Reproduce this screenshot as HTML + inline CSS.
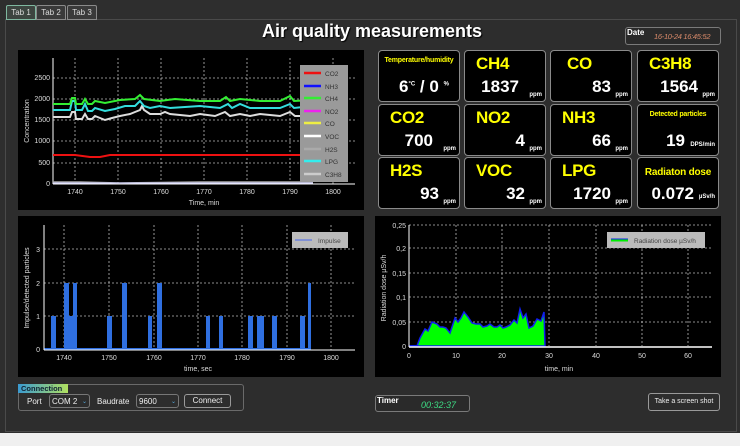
<!DOCTYPE html>
<html><head><meta charset="utf-8"><style>
*{margin:0;padding:0;box-sizing:border-box}
body{width:740px;height:446px;background:#f0f0f0;position:relative;overflow:hidden;font-family:"Liberation Sans",sans-serif}
.a{position:absolute;white-space:nowrap}
#main{left:0;top:0;width:740px;height:433px;background:#2e2e2e}
#panel{left:5px;top:19px;width:732px;height:413px;border:1px solid #4a4a4a;background:#2d2d2d}
.tab{top:5px;height:15px;border:1px solid #8a8a8a;background:#3a3a3a;color:#ddd;font-size:8px;text-align:center;line-height:13px;border-radius:2px 2px 0 0}
.tile{width:82px;height:52px;background:#000;border:1px solid #8a8a8a;border-radius:4px}
.tile .t{position:absolute;left:11px;top:3px;color:#ffff00;font-weight:bold;font-size:17px;letter-spacing:-0.3px}
.tile .ts{position:absolute;left:0;width:100%;text-align:center;top:6px;color:#ffff00;font-weight:bold;font-size:7px;letter-spacing:-0.2px}
.tile .v{position:absolute;right:20px;top:26px;color:#fff;font-weight:bold;font-size:17px}
.tile .u{position:absolute;right:3px;bottom:3px;color:#fff;font-weight:bold;font-size:6px}
.box{border:1px solid #7a7a7a;border-radius:3px}
svg text{font-family:"Liberation Sans",sans-serif}
</style></head><body>
<div class="a" id="main"></div>
<div class="a" id="panel"></div>
<div class="a tab" style="left:6px;width:30px;border-color:#7fb8a0;background:#3d4540">Tab 1</div>
<div class="a tab" style="left:36px;width:30px">Tab 2</div>
<div class="a tab" style="left:67px;width:30px">Tab 3</div>
<div class="a" style="left:0;width:744px;top:21px;text-align:center;color:#fff;font-weight:bold;font-size:18px;text-shadow:1px 1px 1px #000">Air quality measurements</div>

<div class="a box" style="left:625px;top:27px;width:96px;height:18px;background:#2a2a2a">
<span class="a" style="left:1px;top:0;color:#fff;font-size:8px;font-weight:bold">Date</span>
<span class="a" style="left:28px;top:4px;color:#d98a6a;font-size:7.5px;font-style:italic;letter-spacing:-0.3px">16-10-24 16:45:52</span></div>

<!-- tiles -->
<div class="a tile" style="left:378px;top:50px"><div class="ts">Temperature/humidity</div><div class="a" style="left:20px;top:26px;color:#fff;font-weight:bold;font-size:17px">6<sup style="font-size:6px">°C</sup> / 0 <sup style="font-size:6px">%</sup></div></div>
<div class="a tile" style="left:464px;top:50px"><div class="t">CH4</div><div class="v" style="right:26px">1837</div><div class="u">ppm</div></div>
<div class="a tile" style="left:550px;top:50px"><div class="t" style="left:16px">CO</div><div class="v">83</div><div class="u">ppm</div></div>
<div class="a tile" style="left:637px;top:50px"><div class="t">C3H8</div><div class="v">1564</div><div class="u">ppm</div></div>
<div class="a tile" style="left:378px;top:104px"><div class="t">CO2</div><div class="v" style="right:26px">700</div><div class="u">ppm</div></div>
<div class="a tile" style="left:464px;top:104px"><div class="t">NO2</div><div class="v">4</div><div class="u">ppm</div></div>
<div class="a tile" style="left:550px;top:104px"><div class="t">NH3</div><div class="v">66</div><div class="u">ppm</div></div>
<div class="a tile" style="left:637px;top:104px"><div class="ts">Detected particles</div><div class="v" style="right:33px">19</div><div class="u" style="bottom:7px">DPS/min</div></div>
<div class="a tile" style="left:378px;top:157px"><div class="t">H2S</div><div class="v">93</div><div class="u">ppm</div></div>
<div class="a tile" style="left:464px;top:157px"><div class="t">VOC</div><div class="v">32</div><div class="u">ppm</div></div>
<div class="a tile" style="left:550px;top:157px"><div class="t">LPG</div><div class="v">1720</div><div class="u">ppm</div></div>
<div class="a tile" style="left:637px;top:157px"><div class="ts" style="font-size:10px;top:9px">Radiaton dose</div><div class="v" style="right:24px">0.072</div><div class="u" style="bottom:8px">µSv/h</div></div>

<!-- chart1 -->
<svg class="a" style="left:18px;top:50px" width="346" height="160" viewBox="18 50 346 160">
<rect x="18" y="50" width="346" height="160" fill="#000"/>
<g stroke="#bbb" stroke-dasharray="2,2" stroke-width="0.8">
<line x1="75" y1="58" x2="75" y2="184"/><line x1="118" y1="58" x2="118" y2="184"/><line x1="161" y1="58" x2="161" y2="184"/><line x1="204" y1="58" x2="204" y2="184"/><line x1="247" y1="58" x2="247" y2="184"/><line x1="290" y1="58" x2="290" y2="184"/><line x1="333" y1="58" x2="333" y2="184"/>
<line x1="53" y1="78" x2="355" y2="78"/><line x1="53" y1="99" x2="355" y2="99"/><line x1="53" y1="120" x2="355" y2="120"/><line x1="53" y1="141" x2="355" y2="141"/><line x1="53" y1="163" x2="355" y2="163"/></g>
<line x1="53" y1="58" x2="53" y2="184" stroke="#fff"/><line x1="53" y1="184" x2="355" y2="184" stroke="#fff"/>
<g font-size="7" fill="#ddd" text-anchor="end"><text x="50" y="80">2500</text><text x="50" y="101">2000</text><text x="50" y="122">1500</text><text x="50" y="143">1000</text><text x="50" y="165">500</text><text x="50" y="186">0</text></g>
<g font-size="7" fill="#ddd" text-anchor="middle"><text x="75" y="194">1740</text><text x="118" y="194">1750</text><text x="161" y="194">1760</text><text x="204" y="194">1770</text><text x="247" y="194">1780</text><text x="290" y="194">1790</text><text x="333" y="194">1800</text><text x="204" y="205">Time, min</text></g>
<text font-size="7" fill="#ddd" text-anchor="middle" transform="translate(29,121) rotate(-90)">Concentration</text>
<polyline fill="none" stroke="#ddd" stroke-width="2" points="53,117 70,117 72,112 75,112 76,119 82,119 85,114 88,119 92,119 95,116 105,120 112,118 120,116 130,114 135,112 140,110 142,106 144,110 150,114 160,114 165,112 170,114 190,116 200,114 215,116 225,112 230,116 240,114 250,116 260,114 280,116 290,112 295,116 313,116"/>
<polyline fill="none" stroke="#33dddd" stroke-width="2" points="53,110 70,110 72,101 75,101 76,110 82,110 85,104 88,111 92,111 95,108 105,111 115,109 125,106 135,106 140,101 144,106 150,108 160,106 170,108 200,106 220,108 228,104 232,108 240,104 250,108 280,108 290,104 294,108 313,106"/>
<polyline fill="none" stroke="#33ee33" stroke-width="2" points="53,104 70,104 72,98 75,98 76,104 82,104 85,99 88,104 92,104 95,101 105,103 120,100 135,99 140,95 144,99 160,101 175,99 200,101 220,101 226,97 230,101 240,99 260,101 280,101 290,96 294,101 313,100"/>
<polyline fill="none" stroke="#ee1111" stroke-width="2" points="53,155 75,155 90,157 100,157 110,155 200,155 250,155 290,155 313,155"/>
<polyline fill="none" stroke="#aaa" stroke-width="1.5" points="53,182 80,182 120,183 200,182 313,182"/>
<polyline fill="none" stroke="#ccf" stroke-width="1" points="53,183 313,183"/>
<rect x="300" y="65" width="48" height="117" fill="#9a9a9a"/>
<g stroke-width="2.5"><line x1="304" y1="73" x2="321" y2="73" stroke="#e11"/><line x1="304" y1="86" x2="321" y2="86" stroke="#11f"/><line x1="304" y1="98" x2="321" y2="98" stroke="#3e3"/><line x1="304" y1="111" x2="321" y2="111" stroke="#e2e"/><line x1="304" y1="123" x2="321" y2="123" stroke="#ee4"/><line x1="304" y1="136" x2="321" y2="136" stroke="#fff"/><line x1="304" y1="149" x2="321" y2="149" stroke="#aaa"/><line x1="304" y1="161" x2="321" y2="161" stroke="#3ee"/><line x1="304" y1="174" x2="321" y2="174" stroke="#ccc"/></g>
<g font-size="6.5" fill="#333"><text x="325" y="76">CO2</text><text x="325" y="89">NH3</text><text x="325" y="101">CH4</text><text x="325" y="114">NO2</text><text x="325" y="126">CO</text><text x="325" y="139">VOC</text><text x="325" y="152">H2S</text><text x="325" y="164">LPG</text><text x="325" y="177">C3H8</text></g>
</svg>

<!-- chart2 -->
<svg class="a" style="left:18px;top:216px" width="346" height="161" viewBox="18 216 346 161">
<rect x="18" y="216" width="346" height="161" fill="#000"/>
<g stroke="#bbb" stroke-dasharray="2,2" stroke-width="0.8">
<line x1="64" y1="225" x2="64" y2="350"/><line x1="109" y1="225" x2="109" y2="350"/><line x1="154" y1="225" x2="154" y2="350"/><line x1="198" y1="225" x2="198" y2="350"/><line x1="242" y1="225" x2="242" y2="350"/><line x1="287" y1="225" x2="287" y2="350"/><line x1="331" y1="225" x2="331" y2="350"/>
<line x1="44" y1="249" x2="355" y2="249"/><line x1="44" y1="283" x2="355" y2="283"/><line x1="44" y1="316" x2="355" y2="316"/></g>
<g fill="#2f6fe0">
<rect x="51" y="316" width="5" height="34"/><rect x="64" y="283" width="5" height="67"/><rect x="69" y="316" width="4" height="34"/><rect x="73" y="283" width="4" height="67"/>
<rect x="107" y="316" width="5" height="34"/><rect x="122" y="283" width="5" height="67"/><rect x="148" y="316" width="4" height="34"/><rect x="157" y="283" width="5" height="67"/>
<rect x="206" y="316" width="4" height="34"/><rect x="219" y="316" width="4" height="34"/><rect x="248" y="316" width="5" height="34"/><rect x="257" y="316" width="7" height="34"/><rect x="272" y="316" width="5" height="34"/><rect x="300" y="316" width="5" height="34"/><rect x="308" y="283" width="3" height="67"/></g>
<line x1="44" y1="349" x2="311" y2="349" stroke="#2f6fe0" stroke-width="2"/>
<line x1="44" y1="225" x2="44" y2="350" stroke="#fff"/><line x1="44" y1="350" x2="355" y2="350" stroke="#fff"/>
<g font-size="7" fill="#ddd" text-anchor="end"><text x="40" y="252">3</text><text x="40" y="286">2</text><text x="40" y="319">1</text><text x="40" y="352">0</text></g>
<g font-size="7" fill="#ddd" text-anchor="middle"><text x="64" y="360">1740</text><text x="109" y="360">1750</text><text x="154" y="360">1760</text><text x="198" y="360">1770</text><text x="242" y="360">1780</text><text x="287" y="360">1790</text><text x="331" y="360">1800</text><text x="198" y="371">time, sec</text></g>
<text font-size="7" fill="#ddd" text-anchor="middle" transform="translate(29,288) rotate(-90)">Impulse/detected particles</text>
<rect x="292" y="232" width="56" height="16" fill="#bbb"/><line x1="295" y1="240" x2="312" y2="240" stroke="#4466ee"/><text x="318" y="243" font-size="6.5" fill="#444">Impulse</text>
</svg>

<!-- chart3 -->
<svg class="a" style="left:375px;top:216px" width="346" height="161" viewBox="375 216 346 161">
<rect x="375" y="216" width="346" height="161" fill="#000"/>
<g stroke="#bbb" stroke-dasharray="2,2" stroke-width="0.8">
<line x1="456" y1="225" x2="456" y2="346"/><line x1="502" y1="225" x2="502" y2="346"/><line x1="549" y1="225" x2="549" y2="346"/><line x1="596" y1="225" x2="596" y2="346"/><line x1="642" y1="225" x2="642" y2="346"/><line x1="688" y1="225" x2="688" y2="346"/>
<line x1="409" y1="225" x2="712" y2="225"/><line x1="409" y1="248" x2="712" y2="248"/><line x1="409" y1="273" x2="712" y2="273"/><line x1="409" y1="297" x2="712" y2="297"/><line x1="409" y1="322" x2="712" y2="322"/></g>
<polygon fill="#00ff00" stroke="#1020ee" stroke-width="1.5" points="417,346 420,338 425,329 428,331 432,322 437,324 440,327 443,327 446,328 450,333 452,327 455,318 458,322 461,318 464,312 468,317 472,323 476,324 480,324 483,327 487,326 490,324 494,327 497,327 500,325 503,328 506,327 510,325 514,320 517,323 520,309 523,318 526,314 529,328 533,326 537,319 541,321 544,312 545,346"/>
<line x1="409" y1="346" x2="417" y2="346" stroke="#1020ee" stroke-width="2"/>
<line x1="409" y1="225" x2="409" y2="347" stroke="#fff"/><line x1="409" y1="347" x2="712" y2="347" stroke="#fff" stroke-width="1.5"/>
<g font-size="7" fill="#ddd" text-anchor="end"><text x="406" y="228">0,25</text><text x="406" y="251">0,2</text><text x="406" y="276">0,15</text><text x="406" y="300">0,1</text><text x="406" y="325">0,05</text><text x="406" y="349">0</text></g>
<g font-size="7" fill="#ddd" text-anchor="middle"><text x="409" y="358">0</text><text x="456" y="358">10</text><text x="502" y="358">20</text><text x="549" y="358">30</text><text x="596" y="358">40</text><text x="642" y="358">50</text><text x="688" y="358">60</text><text x="559" y="371">time, min</text></g>
<text font-size="7" fill="#ddd" text-anchor="middle" transform="translate(386,288) rotate(-90)">Radiation dose µSv/h</text>
<rect x="607" y="232" width="98" height="16" fill="#bbb"/><line x1="611" y1="240" x2="628" y2="240" stroke="#00ee00" stroke-width="3"/><line x1="611" y1="239" x2="628" y2="239" stroke="#1020ee" stroke-width="1"/><text x="634" y="243" font-size="6.5" fill="#444">Radiation dose µSv/h</text>
</svg>

<!-- connection -->
<div class="a box" style="left:18px;top:384px;width:226px;height:27px;border-color:#6a6a6a"></div>
<div class="a" style="left:18px;top:384px;width:50px;height:9px;background:linear-gradient(90deg,#3a9ad0,#b0e060);color:#123;font-size:7.5px;font-weight:bold;padding-left:3px;line-height:9px">Connection</div>
<div class="a" style="left:27px;top:397px;color:#eee;font-size:8px">Port</div>
<div class="a box" style="left:49px;top:394px;width:41px;height:14px;color:#eee;font-size:8px;padding:2px 0 0 2px;border-color:#777">COM 2<span style="position:absolute;right:2px;color:#5ad;font-size:6px;top:3px">&#8964;</span></div>
<div class="a" style="left:97px;top:397px;color:#eee;font-size:8px">Baudrate</div>
<div class="a box" style="left:136px;top:394px;width:43px;height:14px;color:#eee;font-size:8px;padding:2px 0 0 2px;border-color:#777">9600<span style="position:absolute;right:2px;color:#5ad;font-size:6px;top:3px">&#8964;</span></div>
<div class="a box" style="left:184px;top:394px;width:47px;height:14px;color:#eee;font-size:8px;text-align:center;line-height:12px;border-color:#999">Connect</div>

<div class="a box" style="left:375px;top:395px;width:95px;height:17px;background:#2a2a2a"><span class="a" style="left:1px;top:0;color:#fff;font-size:8px;font-weight:bold">Timer</span><span class="a" style="left:45px;top:4px;color:#3ddc84;font-size:9px;font-style:italic">00:32:37</span></div>
<div class="a box" style="left:648px;top:393px;width:72px;height:18px;color:#eee;font-size:7px;text-align:center;line-height:16px;border-color:#999">Take a screen shot</div>
</body></html>
